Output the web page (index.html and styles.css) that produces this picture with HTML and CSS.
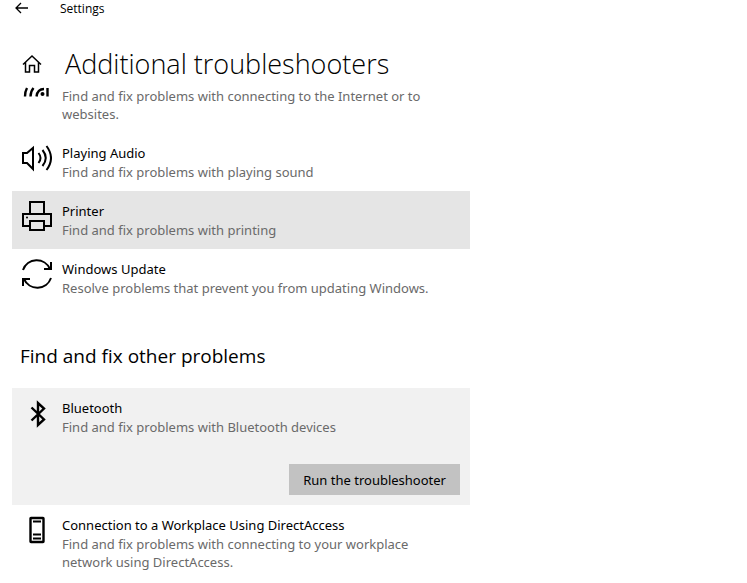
FILE: index.html
```
<!DOCTYPE html>
<html lang="en">
<head>
  <meta charset="UTF-8">
  <meta name="viewport" content="width=device-width, initial-scale=1">
  <title>Settings</title>
  <link rel="stylesheet" href="styles.css">
</head>
<body>

<div class="titlebar">
  <button class="back" aria-label="Back">
    <svg width="14" height="12" viewBox="0 0 14 12"><path d="M13 6H1M6 1L1 6l5 5"/></svg>
  </button>
  <span>Settings</span>
</div>

<header class="header">
  <a class="home" href="#" aria-label="Home">
    <svg width="20" height="20" viewBox="0 0 20 20"><path d="M1 10.500L10 2l9 8.500M3.500 8.500V18h4v-6.500h5V18h4V8.500"/></svg>
  </a>
  <h1>Additional troubleshooters</h1>
</header>

<main class="content">
  <div class="item scrolled">
    <svg class="icon" width="30" height="10" viewBox="1 0 30 10">
      <path class="bold" d="M4 9.500q0-5 2-8.500M9.500 9.500q0-5 3-8.500M15.500 9.500q1-7.500 7.500-7.500"/>
      <path class="bold" d="M26.500 1v8.500"/>
      <circle class="dot" cx="21.500" cy="7" r="2"/>
    </svg>
    <div class="text">
      <p>Find and fix problems with connecting to the Internet or to websites.</p>
    </div>
  </div>

  <div class="item">
    <svg class="icon" width="30" height="30" viewBox="1 1 30 30">
      <path d="M2 11h4l6-5v21l-6-6H2z"/>
      <path d="M17.500 11q4 5 0 10M21.500 8q6.500 8 0 16M25.500 4q9 12 0 24"/>
    </svg>
    <div class="text">
      <h3>Playing Audio</h3>
      <p>Find and fix problems with playing sound</p>
    </div>
  </div>

  <div class="item selected">
    <svg class="icon" width="30" height="30" viewBox="1 1 30 30">
      <path d="M9 14V2h14v12M9 26H2V14h28v12h-7M9 21h14v9H9z"/>
      <circle class="dot" cx="6" cy="17.500" r="1"/>
    </svg>
    <div class="text">
      <h3>Printer</h3>
      <p>Find and fix problems with printing</p>
    </div>
  </div>

  <div class="item">
    <svg class="icon" width="30" height="30" viewBox="1 1 30 30">
      <path d="M2 12A14.500 14.500 0 0 1 29 11M30 4v7h-7M30 20A14.500 14.500 0 0 1 3 21M2 28v-7h7"/>
    </svg>
    <div class="text">
      <h3>Windows Update</h3>
      <p>Resolve problems that prevent you from updating Windows.</p>
    </div>
  </div>

  <h2>Find and fix other problems</h2>

  <div class="item open">
    <svg class="icon" width="30" height="30" viewBox="1 1 30 30">
      <path class="bold" d="M10.500 10.500l12.500 12-6 5.500V6l6 5.500-12.500 12"/>
    </svg>
    <div class="text">
      <h3>Bluetooth</h3>
      <p>Find and fix problems with Bluetooth devices</p>
    </div>
    <button class="run">Run the troubleshooter</button>
  </div>

  <div class="item">
    <svg class="icon" width="30" height="30" viewBox="1 1 30 30">
      <rect class="bold" x="9.500" y="4" width="13" height="24" rx="0.500"/>
      <path d="M12 7.500h8M12 20.500h8M12 24.500h8"/>
    </svg>
    <div class="text">
      <h3>Connection to a Workplace Using DirectAccess</h3>
      <p>Find and fix problems with connecting to your workplace network using DirectAccess.</p>
    </div>
  </div>
</main>

</body>
</html>
```
FILE: styles.css
```
body {
  margin: 0;
  background: #fff;
  color: #000;
  font-family: "Open Sans", sans-serif;
  font-size: 13px;
}
h1, h2, h3, p {
  margin: 0;
  font-weight: 400;
}
svg {
  display: block;
  fill: none;
  stroke: #000;
  stroke-width: 1.3;
}
button {
  border: none;
  font: inherit;
  color: inherit;
}
.titlebar {
  display: flex;
  align-items: center;
  gap: 31px;
  height: 16px;
  padding-left: 15px;
  font-size: 12px;
}
.back {
  padding: 0;
  background: none;
}
.header {
  display: flex;
  align-items: center;
  gap: 23px;
  height: 40px;
  padding: 28px 0 3px 22px;
}
.header h1 {
  font-size: 27px;
  font-weight: 300;
  line-height: 40px;
}
.home svg {
  stroke-width: 1.5;
}
.content {
  max-width: 458px;
  margin-left: 12px;
}
.item {
  display: flex;
  flex-wrap: wrap;
  gap: 0 10px;
  padding: 10px;
  font-family: "Noto Sans", "Open Sans", sans-serif;
}
.item.scrolled {
  padding-top: 0;
}
.selected {
  background: #e5e5e5;
}
.open {
  background: #f1f1f1;
}
.icon {
  flex: none;
  stroke-width: 2;
}
.icon .bold {
  stroke-width: 2.4;
}
.icon .dot {
  fill: #000;
  stroke: none;
}
.text {
  box-sizing: border-box;
  width: calc(100% - 40px);
  padding-right: 20px;
}
.text h3 {
  font-size: 13px;
  line-height: 20px;
}
.text p {
  color: #6a6a6a;
  line-height: 18px;
}
.content h2 {
  margin: 34px 8px 17px;
  font-size: 19px;
  line-height: 30px;
}
.run {
  height: 31px;
  margin: 28px 0 0 auto;
  padding: 0 14px;
  background: #c2c2c2;
}
```
